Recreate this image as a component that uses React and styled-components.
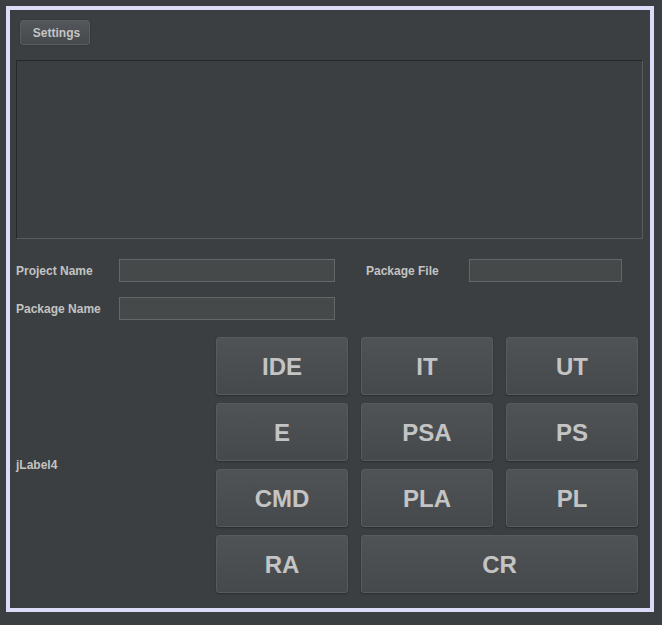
import React from 'react'
import styled, { createGlobalStyle } from 'styled-components'

const GlobalStyle = createGlobalStyle`
  html, body {
    margin: 0;
    padding: 0;
    background: #3c3f41;
    font-family: "Liberation Sans", Arial, sans-serif;
  }
`

const App = () => {
  return (
    <>
      <GlobalStyle />
      <Frame>
        <TopBar>
          <SettingsButton>Settings</SettingsButton>
        </TopBar>
        <OutputArea />

        <FormGrid>
          <Label>Project Name</Label>
          <Field width={216} />
          <Label indent={31}>Package File</Label>
          <Field width={153} />
          <Label>Package Name</Label>
          <Field width={216} />
        </FormGrid>

        <BottomRow>
          <SideLabel>jLabel4</SideLabel>
          <ButtonGrid>
            <BigButton>IDE</BigButton>
            <BigButton>IT</BigButton>
            <BigButton>UT</BigButton>
            <BigButton>E</BigButton>
            <BigButton>PSA</BigButton>
            <BigButton>PS</BigButton>
            <BigButton>CMD</BigButton>
            <BigButton>PLA</BigButton>
            <BigButton>PL</BigButton>
            <BigButton>RA</BigButton>
            <BigButton span={2}>CR</BigButton>
          </ButtonGrid>
        </BottomRow>
      </Frame>
    </>
  )
}
export default App

const Frame = styled.div`
  box-sizing: border-box;
  margin: 6px;
  width: 648px;
  height: 606px;
  border: 4px solid #dcdcf8;
  background: #3c3f41;
  padding: 10px 7px 0 6px;
  display: flex;
  flex-direction: column;
`

const TopBar = styled.div`
  display: flex;
  padding-left: 4px;
`

const SettingsButton = styled.button`
  box-sizing: border-box;
  width: 70px;
  height: 25px;
  padding: 0 0 0 3px;
  border: 1px solid #5b5e61;
  border-radius: 3px;
  background: linear-gradient(#53565a, #46494c);
  color: #c4c4c4;
  font-family: "Liberation Sans", Arial, sans-serif;
  font-weight: bold;
  font-size: 12px;
  box-shadow: 0 0 2px rgba(0, 0, 0, 0.35);
`

const OutputArea = styled.div`
  box-sizing: border-box;
  margin-top: 15px;
  width: 627px;
  height: 179px;
  border: 1px solid #252729;
  border-bottom-color: #5a5d60;
  border-right-color: #5a5d60;
  background: #3c3f41;
`

const FormGrid = styled.div`
  display: grid;
  grid-template-columns: 103px 216px 134px 153px;
  grid-auto-rows: 23px;
  row-gap: 15px;
  margin-top: 20px;
  align-items: center;
`

const Label = styled.span`
  color: #c3c3c3;
  font-weight: bold;
  font-size: 12px;
  padding-left: ${({ indent }) => (indent || 0)}px;
  white-space: nowrap;
`

const Field = styled.div`
  box-sizing: border-box;
  width: ${({ width }) => width}px;
  height: 23px;
  border: 1px solid #646769;
  background: #45494a;
`

const BottomRow = styled.div`
  display: flex;
  align-items: center;
  margin-top: 17px;
`

const SideLabel = styled.span`
  width: 200px;
  color: #c3c3c3;
  font-weight: bold;
  font-size: 12px;
`

const ButtonGrid = styled.div`
  display: grid;
  grid-template-columns: repeat(3, 132px);
  grid-auto-rows: 58px;
  column-gap: 13px;
  row-gap: 8px;
`

const BigButton = styled.button`
  box-sizing: border-box;
  grid-column: span ${({ span }) => span || 1};
  padding: 2px 0 0 0;
  border: 1px solid #585b5e;
  border-radius: 3px;
  background: linear-gradient(#505356, #46494c);
  color: #c4c4c4;
  font-family: "Liberation Sans", Arial, sans-serif;
  font-weight: bold;
  font-size: 24px;
  box-shadow: 0 1px 2px rgba(0, 0, 0, 0.3);
`
